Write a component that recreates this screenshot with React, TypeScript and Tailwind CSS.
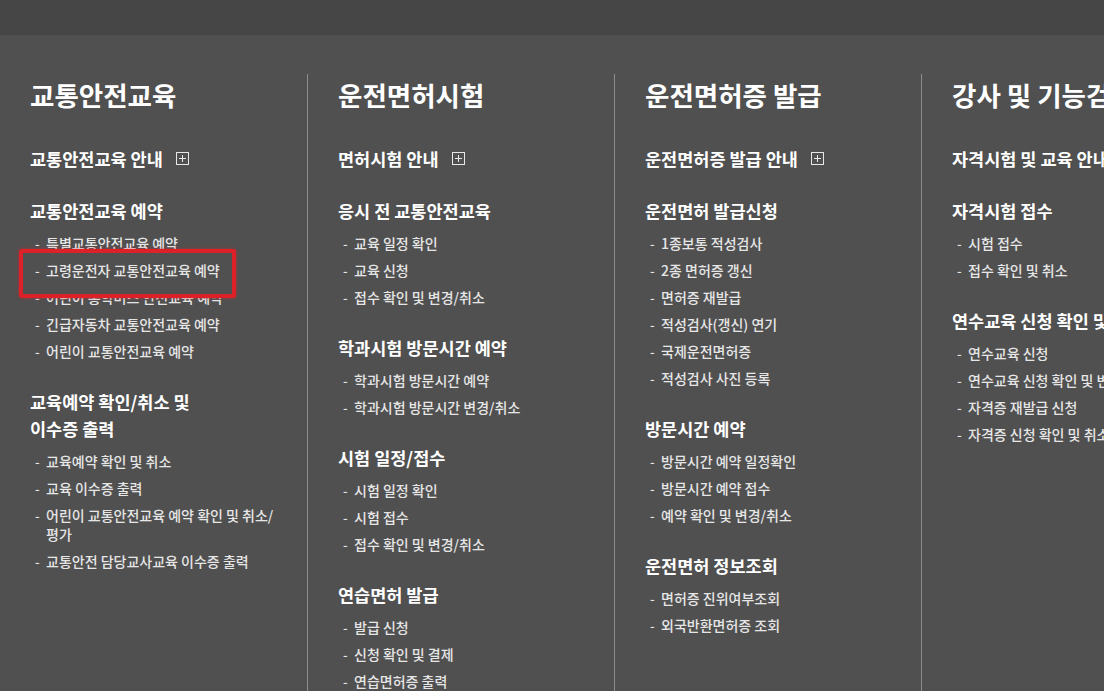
import type { ReactNode } from 'react';

/**
 * Site-map mega menu: four service columns, each a big title, a "guide"
 * link with a boxed plus, and grouped sub-menus with dash bullets.
 * One item carries a red review marker laid over the list.
 */

type Section = {
  title: ReactNode;
  guide?: boolean;
  items?: string[];
};

type Column = {
  title: string;
  sections: Section[];
};

const HIGHLIGHT = '고령운전자 교통안전교육 예약';

const COLUMNS: Column[] = [
  {
    title: '교통안전교육',
    sections: [
      { title: '교통안전교육 안내', guide: true },
      {
        title: '교통안전교육 예약',
        items: [
          '특별교통안전교육 예약',
          '고령운전자 교통안전교육 예약',
          '어린이 통학버스 안전교육 예약',
          '긴급자동차 교통안전교육 예약',
          '어린이 교통안전교육 예약',
        ],
      },
      {
        title: (
          <>
            교육예약 확인/취소 및
            <br />
            이수증 출력
          </>
        ),
        items: [
          '교육예약 확인 및 취소',
          '교육 이수증 출력',
          '어린이 교통안전교육 예약 확인 및 취소/ 평가',
          '교통안전 담당교사교육 이수증 출력',
        ],
      },
    ],
  },
  {
    title: '운전면허시험',
    sections: [
      { title: '면허시험 안내', guide: true },
      { title: '응시 전 교통안전교육', items: ['교육 일정 확인', '교육 신청', '접수 확인 및 변경/취소'] },
      { title: '학과시험 방문시간 예약', items: ['학과시험 방문시간 예약', '학과시험 방문시간 변경/취소'] },
      { title: '시험 일정/접수', items: ['시험 일정 확인', '시험 접수', '접수 확인 및 변경/취소'] },
      { title: '연습면허 발급', items: ['발급 신청', '신청 확인 및 결제', '연습면허증 출력'] },
    ],
  },
  {
    title: '운전면허증 발급',
    sections: [
      { title: '운전면허증 발급 안내', guide: true },
      {
        title: '운전면허 발급신청',
        items: ['1종보통 적성검사', '2종 면허증 갱신', '면허증 재발급', '적성검사(갱신) 연기', '국제운전면허증', '적성검사 사진 등록'],
      },
      { title: '방문시간 예약', items: ['방문시간 예약 일정확인', '방문시간 예약 접수', '예약 확인 및 변경/취소'] },
      { title: '운전면허 정보조회', items: ['면허증 진위여부조회', '외국반환면허증 조회'] },
    ],
  },
  {
    title: '강사 및 기능검정원',
    sections: [
      { title: '자격시험 및 교육 안내', guide: true },
      { title: '자격시험 접수', items: ['시험 접수', '접수 확인 및 취소'] },
      {
        title: '연수교육 신청 확인 및 취소',
        items: ['연수교육 신청', '연수교육 신청 확인 및 변경/취소', '자격증 재발급 신청', '자격증 신청 확인 및 취소'],
      },
    ],
  },
];

function PlusBox() {
  return (
    <svg width="13" height="13" viewBox="0 0 13 13" className="ml-[13px] shrink-0" aria-hidden>
      <rect x="0.5" y="0.5" width="12" height="12" fill="none" stroke="#e8e8e8" strokeWidth="1" />
      <path d="M6.5 3v7M3 6.5h7" stroke="#e8e8e8" strokeWidth="1" />
    </svg>
  );
}

function MenuItem({ text }: { text: string }) {
  const marked = text === HIGHLIGHT;
  return (
    <li className={`flex text-[14px] font-medium leading-[19px] text-[#e6e6e6] ${marked ? 'relative z-10' : ''}`}>
      {marked && (
        // review marker drawn over the list; its fill hides the neighbouring rows' edges
        <span className="absolute left-[-11px] top-[-12px] -z-10 h-[49px] w-[217px] rounded-[3px] border-4 border-[#dc2128] bg-[#505050] shadow-[0_0_3px_rgba(220,33,40,0.7)]" />
      )}
      <span className="w-[16px] shrink-0 pl-[5px] text-[13px]">-</span>
      <span className="break-keep">{text}</span>
    </li>
  );
}

function MenuColumn({ column, first }: { column: Column; first: boolean }) {
  return (
    <div className={`w-[307px] shrink-0 pl-[30px] pr-[17px] ${first ? '' : 'border-l border-[#8c8c8c]'}`}>
      <h2 className="mb-[29px] whitespace-nowrap text-[26.5px] font-bold leading-[42px] text-white">{column.title}</h2>
      <div className="flex flex-col">
        {column.sections.map((section, i) => (
          <div key={i} className={i === 0 ? '' : i === 1 ? 'mt-[25px]' : 'mt-[27px]'}>
            <h3 className="flex items-center whitespace-nowrap text-[17.5px] font-bold leading-[27px] text-white">
              <span>{section.title}</span>
              {section.guide && <PlusBox />}
            </h3>
            {section.items && (
              <ul className="mt-[10px] flex flex-col gap-[8px]">
                {section.items.map((item) => (
                  <MenuItem key={item} text={item} />
                ))}
              </ul>
            )}
          </div>
        ))}
      </div>
    </div>
  );
}

export default function App() {
  return (
    <div
      className="flex h-[691px] w-[1104px] flex-col overflow-hidden bg-[#505050]"
      style={{ fontFamily: '"Noto Sans CJK KR", "Noto Sans", sans-serif' }}
    >
      <div className="h-[35px] shrink-0 bg-[#464646]" />
      <div className="flex flex-1 pt-[39px]">
        {COLUMNS.map((column, i) => (
          <MenuColumn key={column.title} column={column} first={i === 0} />
        ))}
      </div>
    </div>
  );
}
